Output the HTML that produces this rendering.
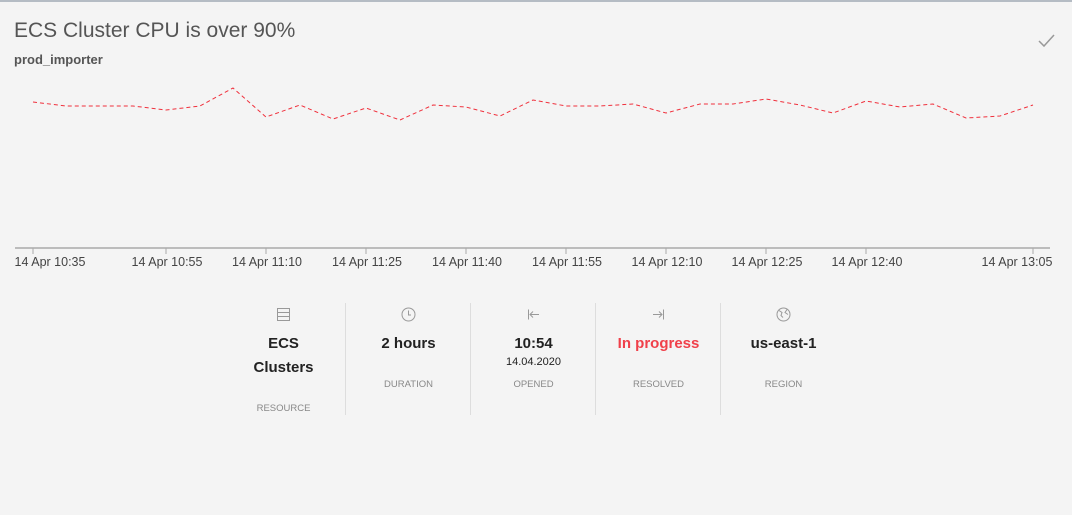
<!DOCTYPE html>
<html><head><style>
body{margin:0;width:1072px;height:515px;background:#f4f4f4;font-family:"Liberation Sans",sans-serif;position:relative;overflow:hidden}
.top{position:absolute;top:0;left:0;width:1072px;height:2px;background:#b5bcc4}
h1{position:absolute;left:14px;top:19px;margin:0;font-size:21px;font-weight:normal;color:#555}
.sub{position:absolute;left:14px;top:52px;font-size:13px;color:#555;font-weight:bold}
.lbl{position:absolute;top:255px;font-size:12.5px;color:#444;white-space:nowrap;transform:translateX(-50%)}
.col{position:absolute;top:303px;width:125px;height:112px;text-align:center}
.sep{border-left:1px solid #ddd}
.ic{position:absolute;top:2px;left:0;width:100%;height:18px}
.v{position:absolute;top:29px;width:100%;font-size:15px;color:#222;line-height:24px;font-weight:bold}
.cap{position:absolute;width:100%;font-size:9.5px;color:#888}
.d{position:absolute;top:53px;width:100%;font-size:11px;color:#222}
</style></head><body>
<div class="top"></div>
<h1>ECS Cluster CPU is over 90%</h1>
<div class="sub">prod_importer</div>
<svg style="position:absolute;left:1036px;top:33px" width="20" height="16"><path d="M3 8 L8 13 L18 2" fill="none" stroke="#999" stroke-width="1.5"/></svg>
<svg style="position:absolute;left:0;top:0" width="1072" height="280">
<polyline fill="none" stroke="#f0303c" stroke-width="1" stroke-dasharray="4,3" points="33,102 66,106 100,106 133,106 166,110 200,106 233,88 266,117 300,105 333,119 366,108 400,120 433,105 466,107 500,116 533,100 566,106 600,106 633,104 666,113 700,104 733,104 766,99 800,105 833,113 866,101 900,107 933,104 966,118 1000,116 1033,105"/>
<line x1="15" y1="248" x2="1050" y2="248" stroke="#aaa" stroke-width="1.5"/>
<g stroke="#aaa"><line x1="33" y1="248" x2="33" y2="254"/><line x1="166" y1="248" x2="166" y2="254"/><line x1="266" y1="248" x2="266" y2="254"/><line x1="366" y1="248" x2="366" y2="254"/><line x1="466" y1="248" x2="466" y2="254"/><line x1="566" y1="248" x2="566" y2="254"/><line x1="666" y1="248" x2="666" y2="254"/><line x1="766" y1="248" x2="766" y2="254"/><line x1="866" y1="248" x2="866" y2="254"/><line x1="1033" y1="248" x2="1033" y2="254"/></g>
</svg>
<div class="lbl" style="left:50px">14 Apr 10:35</div>
<div class="lbl" style="left:167px">14 Apr 10:55</div>
<div class="lbl" style="left:267px">14 Apr 11:10</div>
<div class="lbl" style="left:367px">14 Apr 11:25</div>
<div class="lbl" style="left:467px">14 Apr 11:40</div>
<div class="lbl" style="left:567px">14 Apr 11:55</div>
<div class="lbl" style="left:667px">14 Apr 12:10</div>
<div class="lbl" style="left:767px">14 Apr 12:25</div>
<div class="lbl" style="left:867px">14 Apr 12:40</div>
<div class="lbl" style="left:1017px">14 Apr 13:05</div>

<div class="col" style="left:221px">
<svg class="ic" viewBox="0 0 125 18"><g fill="none" stroke="#999"><rect x="56.5" y="3.5" width="12" height="12"/><line x1="56.5" y1="7.5" x2="68.5" y2="7.5"/><line x1="56.5" y1="11.5" x2="68.5" y2="11.5"/></g></svg>
<div class="v">ECS<br>Clusters</div><div class="cap" style="top:100px">RESOURCE</div></div>
<div class="col sep" style="left:345px">
<svg class="ic" viewBox="0 0 125 18"><g fill="none" stroke="#999"><circle cx="62.5" cy="9.5" r="6.5"/><path d="M62.5 5.5v4.5h2.5"/></g></svg>
<div class="v">2 hours</div><div class="cap" style="top:76px">DURATION</div></div>
<div class="col sep" style="left:470px">
<svg class="ic" viewBox="0 0 125 18"><g fill="none" stroke="#999"><path d="M57.5 4.5v10M59 9.5h9M62 6.5l-3 3 3 3"/></g></svg>
<div class="v">10:54</div><div class="d">14.04.2020</div><div class="cap" style="top:76px">OPENED</div></div>
<div class="col sep" style="left:595px">
<svg class="ic" viewBox="0 0 125 18"><g fill="none" stroke="#999"><path d="M67.5 4.5v10M57 9.5h9M63 6.5l3 3-3 3"/></g></svg>
<div class="v" style="color:#f0404a">In progress</div><div class="cap" style="top:76px">RESOLVED</div></div>
<div class="col sep" style="left:720px">
<svg class="ic" viewBox="0 0 125 18"><g fill="none" stroke="#999"><circle cx="62.5" cy="9.5" r="6.5"/><path d="M58 5.5l3 2-1 3 2 2M66 4.5l-2 3 3 2"/></g></svg>
<div class="v">us-east-1</div><div class="cap" style="top:76px">REGION</div></div>
</body></html>
